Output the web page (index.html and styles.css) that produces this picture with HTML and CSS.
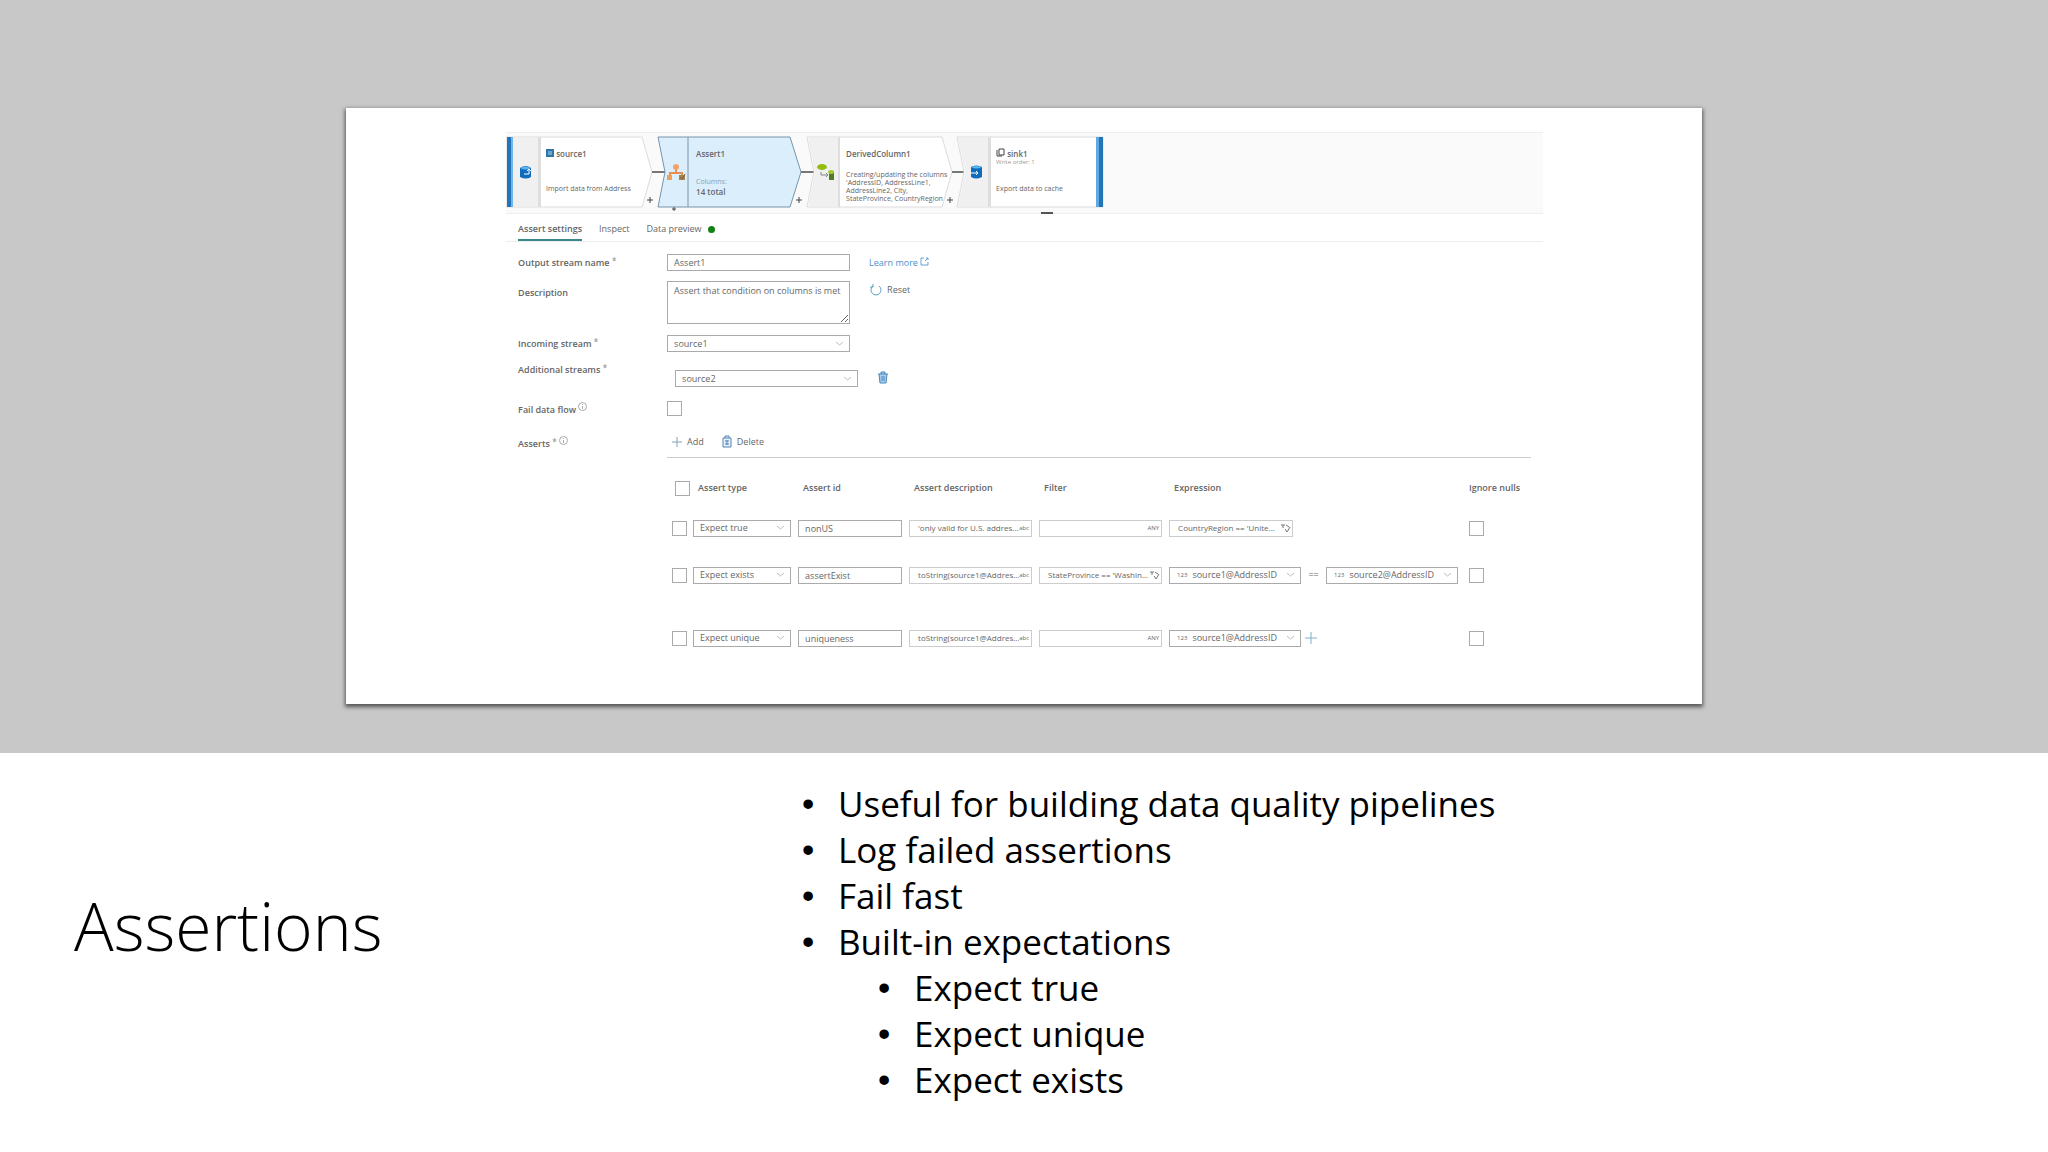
FILE: index.html
```html
<!DOCTYPE html>
<html lang="en">
<head>
  <meta charset="UTF-8">
  <meta name="viewport" content="width=device-width, initial-scale=1.0">
  <title>Assertions</title>
  <link rel="stylesheet" href="styles.css">
</head>
<body>

  <!-- Data flow editor -->
  <section class="stage">
    <div class="card">
      <div class="flow">
        <div class="node node-source">
          <svg class="node-shape" viewBox="0 0 150 70" width="150" height="70">
            <path d="M0 0H135L145 35L135 70H0Z" fill="#fff" stroke="#dcdcdc"/>
            <path d="M6 1H31V69H6Z" fill="#f0f0f0"/>
            <path d="M31 0H34V70H31Z" fill="#dedede"/>
            <path d="M0 0H4V70H0Z" fill="#2474b8"/>
            <path d="M4 0H6V70H4Z" fill="#70b4ee"/>
            <path d="M145 35H158" stroke="#777" stroke-width="2"/>
            <path d="M143 60V66M140 63H146" stroke="#444"/>
          </svg>
          <svg class="node-icon" viewBox="0 0 14 14" width="14" height="14">
            <path d="M1 3Q7 -1 12 3V12Q7 15 1 12Z" fill="#0f6cbd"/>
            <path d="M1 3Q7 6 12 3Q7 0 1 3" fill="#5ab6ee"/>
            <path d="M5 9H10V5M8 6L10 4L12 6" fill="none" stroke="#fff"/>
          </svg>
          <div class="node-text">
            <strong><svg viewBox="0 0 8 8" width="8" height="8"><path d="M0 0H8V8H0Z" fill="#2e75a8"/><path d="M2 3H6M2 5H6" stroke="#a9d5f0"/></svg> source1</strong>
            <span class="node-note">Import data from Address</span>
          </div>
        </div>

        <div class="node node-assert">
          <svg class="node-shape" viewBox="0 0 150 70" width="150" height="70">
            <path d="M1 0H133L144 35L133 70H1L8 35Z" fill="#dbeefc" stroke="#7894aa"/>
            <path d="M31 0V70" stroke="#7894aa"/>
            <path d="M144 35H158" stroke="#777" stroke-width="2"/>
            <path d="M142 60V66M139 63H145M17 70V74M15 72H19" stroke="#444"/>
          </svg>
          <svg class="node-icon" viewBox="0 0 18 18" width="18" height="18">
            <path d="M9 5V10M3 14V10H15V14" fill="none" stroke="#e8904f" stroke-width="2"/>
            <circle cx="9" cy="4" r="3" fill="#f3a268"/>
            <path d="M0 12H5V17H0Z" fill="#e9a15f"/>
            <path d="M12 12H18V17H12Z" fill="#a88449"/>
            <path d="M13 14L15 16L18 11" fill="none" stroke="#6d6540"/>
          </svg>
          <div class="node-text">
            <strong>Assert1</strong>
            <span class="node-columns">Columns:</span>
            <span class="node-total">14 total</span>
          </div>
        </div>

        <div class="node node-derived">
          <svg class="node-shape" viewBox="0 0 150 70" width="150" height="70">
            <path d="M0 0H135L145 35L135 70H0L7 35Z" fill="#fff" stroke="#dcdcdc"/>
            <path d="M1 1H31V69H1L8 35Z" fill="#f0f0f0"/>
            <path d="M31 0H33V70H31Z" fill="#dedede"/>
            <path d="M145 35H158" stroke="#777" stroke-width="2"/>
            <path d="M143 60V66M140 63H146" stroke="#444"/>
          </svg>
          <svg class="node-icon" viewBox="0 0 18 18" width="18" height="18">
            <ellipse cx="5" cy="4" rx="5" ry="3" fill="#94bd0d"/>
            <path d="M4 9V12H11M9 10L11 12L9 14" fill="none" stroke="#858585"/>
            <path d="M12 8H17V17H12Z" fill="#557a24"/>
            <ellipse cx="14" cy="9" rx="3" ry="2" fill="#a3c739"/>
          </svg>
          <div class="node-text">
            <strong>DerivedColumn1</strong>
            <p class="node-desc">Creating/updating the columns 'AddressID, AddressLine1, AddressLine2, City, StateProvince, CountryRegion</p>
          </div>
        </div>

        <div class="node node-sink">
          <svg class="node-shape" viewBox="0 0 150 70" width="150" height="70">
            <path d="M0 0H146V70H0L7 35Z" fill="#fff" stroke="#dcdcdc"/>
            <path d="M1 1H31V69H1L8 35Z" fill="#f0f0f0"/>
            <path d="M31 0H34V70H31Z" fill="#dedede"/>
            <path d="M139 0H142V70H139Z" fill="#5ea9e4"/>
            <path d="M142 0H146V70H142Z" fill="#2474b8"/>
          </svg>
          <svg class="node-icon" viewBox="0 0 14 14" width="14" height="14">
            <path d="M2 2Q7 -1 13 2V12Q7 15 2 12Z" fill="#0f6cbd"/>
            <path d="M2 2Q7 5 13 2Q7 0 2 2" fill="#5ab6ee"/>
            <path d="M0 8H9M7 6L9 8L7 10" fill="none" stroke="#fff"/>
          </svg>
          <div class="node-text">
            <strong><svg viewBox="0 0 9 9" width="9" height="9"><path d="M1 2V8H6M3 1H8V7H3Z" fill="none" stroke="#444"/></svg> sink1</strong>
            <span class="node-order">Write order: 1</span>
            <span class="node-note">Export data to cache</span>
          </div>
        </div>
        <span class="flow-handle"></span>
      </div>

      <nav class="tabs">
        <button class="tab tab-active" type="button">Assert settings</button>
        <button class="tab" type="button">Inspect</button>
        <button class="tab" type="button">Data preview <span class="dot"></span></button>
      </nav>

      <form class="settings">
        <div class="row row-name">
          <label for="streamName">Output stream name <sup>*</sup></label>
          <input class="field" id="streamName" type="text" value="Assert1">
          <a class="learn" href="#">Learn more <svg viewBox="0 0 9 9" width="9" height="9"><path d="M4 1H1V8H8V5M6 1H8V3M8 1L5 4" fill="none" stroke="#64a3d6"/></svg></a>
        </div>
        <div class="row row-desc">
          <label for="description">Description</label>
          <textarea class="field" id="description">Assert that condition on columns is met</textarea>
          <button class="reset" type="button">
            <svg viewBox="0 0 12 12" width="12" height="12"><path d="M3 2A5 5 0 1 0 9 2M3 0V3H0" fill="none" stroke="#5b9fc0"/></svg>
            Reset
          </button>
        </div>
        <div class="row row-incoming">
          <label for="incoming">Incoming stream <sup>*</sup></label>
          <select class="field" id="incoming"><option>source1</option></select>
        </div>
        <div class="row row-additional">
          <label for="additional">Additional streams <sup>*</sup></label>
          <select class="field" id="additional"><option>source2</option></select>
          <button class="trash" type="button" aria-label="Remove stream">
            <svg viewBox="0 0 10 12" width="10" height="12"><path d="M0 2H10M3 2V0H7V2M1 2L2 11H8L9 2" fill="#a9cdec" stroke="#4888bd"/><path d="M4 4V9M6 4V9" stroke="#4888bd"/></svg>
          </button>
        </div>
        <div class="row row-fail">
          <label for="fail">Fail data flow <svg class="info" viewBox="0 0 9 9" width="9" height="9"><circle cx="4.5" cy="4.5" r="4"/><path d="M4.5 4V7M4.5 2V3"/></svg></label>
          <input class="check" id="fail" type="checkbox">
        </div>
        <div class="row row-asserts">
          <span class="row-label">Asserts <sup>*</sup> <svg class="info" viewBox="0 0 9 9" width="9" height="9"><circle cx="4.5" cy="4.5" r="4"/><path d="M4.5 4V7M4.5 2V3"/></svg></span>
          <div class="toolbar">
            <button type="button"><svg viewBox="0 0 10 10" width="10" height="10"><path d="M5 0V10M0 5H10" stroke="#7fa3b5"/></svg> Add</button>
            <button type="button"><svg viewBox="0 0 10 12" width="10" height="12"><path d="M1 2H9V11H1ZM3 2V0H7V2" fill="#e6f0fa" stroke="#5684b8"/><path d="M5 4V9M3 5H7M3 8H7" stroke="#5684b8"/></svg> Delete</button>
          </div>
        </div>

        <table class="asserts">
          <thead>
            <tr>
              <th class="col-check"><input class="check" type="checkbox" aria-label="Select all"></th>
              <th class="col-type">Assert type</th>
              <th class="col-id">Assert id</th>
              <th class="col-desc">Assert description</th>
              <th class="col-filter">Filter</th>
              <th class="col-expr">Expression</th>
              <th class="col-nulls">Ignore nulls</th>
            </tr>
          </thead>
          <tbody>
            <tr class="assert-true">
              <td><input class="check" type="checkbox" aria-label="Select row"></td>
              <td><select class="field" aria-label="Assert type"><option>Expect true</option></select></td>
              <td><input class="field" type="text" value="nonUS" aria-label="Assert id"></td>
              <td><div class="expr"><input type="text" value="'only valid for U.S. addres..." aria-label="Assert description"><span>abc</span></div></td>
              <td><div class="expr"><input type="text" value="" aria-label="Filter"><span>ANY</span></div></td>
              <td><div class="expr expr-first"><input type="text" value="CountryRegion == 'Unite..." aria-label="Expression"><svg viewBox="0 0 9 9" width="9" height="9"><path d="M0 1H4M2 1V4M4 5L6 8L9 3M5 1L8 3" fill="none" stroke="#777"/></svg></div></td>
              <td><input class="check" type="checkbox" aria-label="Ignore nulls"></td>
            </tr>
            <tr class="assert-exists">
              <td><input class="check" type="checkbox" aria-label="Select row"></td>
              <td><select class="field" aria-label="Assert type"><option>Expect exists</option></select></td>
              <td><input class="field" type="text" value="assertExist" aria-label="Assert id"></td>
              <td><div class="expr"><input type="text" value="toString(source1@Addres..." aria-label="Assert description"><span>abc</span></div></td>
              <td><div class="expr"><input type="text" value="StateProvince == 'Washin..." aria-label="Filter"><svg viewBox="0 0 9 9" width="9" height="9"><path d="M0 1H4M2 1V4M4 5L6 8L9 3M5 1L8 3" fill="none" stroke="#777"/></svg></div></td>
              <td>
                <div class="pair">
                  <div class="column"><span>123</span><select aria-label="Left column"><option>source1@AddressID</option></select></div>
                  <span class="equals">==</span>
                  <div class="column"><span>123</span><select aria-label="Right column"><option>source2@AddressID</option></select></div>
                </div>
              </td>
              <td><input class="check" type="checkbox" aria-label="Ignore nulls"></td>
            </tr>
            <tr class="assert-unique">
              <td><input class="check" type="checkbox" aria-label="Select row"></td>
              <td><select class="field" aria-label="Assert type"><option>Expect unique</option></select></td>
              <td><input class="field" type="text" value="uniqueness" aria-label="Assert id"></td>
              <td><div class="expr"><input type="text" value="toString(source1@Addres..." aria-label="Assert description"><span>abc</span></div></td>
              <td><div class="expr"><input type="text" value="" aria-label="Filter"><span>ANY</span></div></td>
              <td>
                <div class="pair">
                  <div class="column"><span>123</span><select aria-label="Column"><option>source1@AddressID</option></select></div>
                  <button class="add-column" type="button" aria-label="Add column"><svg viewBox="0 0 12 12" width="12" height="12"><path d="M6 0V12M0 6H12" stroke="#7fb0cc"/></svg></button>
                </div>
              </td>
              <td><input class="check" type="checkbox" aria-label="Ignore nulls"></td>
            </tr>
          </tbody>
        </table>
      </form>
    </div>
  </section>

  <!-- Slide text -->
  <section class="notes">
    <h1>Assertions</h1>
    <ul>
      <li>Useful for building data quality pipelines</li>
      <li>Log failed assertions</li>
      <li>Fail fast</li>
      <li>Built-in expectations
        <ul>
          <li>Expect true</li>
          <li>Expect unique</li>
          <li>Expect exists</li>
        </ul>
      </li>
    </ul>
  </section>

</body>
</html>
```
FILE: styles.css
```css
* {
  box-sizing: border-box;
}

body {
  margin: 0;
  background-color: #fff;
  color: #000;
  font-family: "Open Sans", "Noto Sans", sans-serif;
}

.stage {
  padding: 108px 16.9% 49px;
  background-color: #c8c8c9;
}

.card {
  padding: 24px 159px 30px 160px;
  background-color: #fff;
  box-shadow: 0 2px 4px 1px #555;
  color: #666;
  font-size: 9px;
  line-height: 12px;
}

button,
input,
select,
textarea {
  margin: 0;
  padding: 0;
  border: 0;
  border-radius: 0;
  background: none;
  color: inherit;
  font: inherit;
}

svg {
  overflow: visible;
  flex: none;
}

/* Flow */
.flow {
  position: relative;
  display: flex;
  height: 82px;
  padding: 4px 1px;
  background-color: #fafafa;
  border-top: 1px solid #eee;
  border-bottom: 1px solid #eee;
}

.node {
  position: relative;
  display: flex;
  width: 150px;
  height: 70px;
}

.node-shape {
  position: absolute;
  top: 0;
  left: 0;
}

.node-icon {
  position: relative;
  align-self: center;
  margin-left: 10px;
}

.node-source .node-icon,
.node-sink .node-icon {
  margin-left: 12px;
}

.node-text {
  position: relative;
  display: flex;
  flex-direction: column;
  width: 104px;
  height: 70px;
  margin-left: 11px;
  padding-top: 11px;
  font-size: 8px;
  line-height: 11px;
}

.node-source .node-text,
.node-sink .node-text {
  margin-left: 13px;
}

.node-text strong {
  font-weight: 600;
}

.node-note {
  margin-top: auto;
  padding-bottom: 13px;
  font-size: 7px;
}

.node-order {
  color: #999;
  font-size: 6px;
  line-height: 6px;
}

.node-columns {
  margin-top: 18px;
  color: #8aa0b0;
  font-size: 7px;
  line-height: 10px;
}

.node-total {
  font-weight: 600;
  line-height: 10px;
}

.node-desc {
  margin: 12px 0 0;
  font-size: 7px;
  line-height: 8px;
}

.flow-handle {
  position: absolute;
  bottom: -1px;
  left: 535px;
  width: 12px;
  height: 2px;
  background-color: #555;
}

/* Tabs */
.tabs {
  display: flex;
  gap: 17px;
  height: 28px;
  padding-left: 12px;
  border-bottom: 1px solid #eee;
}

.tab {
  display: flex;
  align-items: center;
  gap: 6px;
  padding-top: 5px;
  border-bottom: 2px solid transparent;
}

.tab-active {
  border-bottom-color: #3c8589;
  font-weight: 600;
}

.dot {
  width: 7px;
  height: 7px;
  border-radius: 50%;
  background-color: #128212;
}

/* Settings */
.settings {
  padding: 12px 12px 0;
}

.row {
  display: grid;
  grid-template-columns: 149px 183px 1fr;
  align-items: center;
  justify-items: start;
}

.row label,
.row-label {
  font-weight: 600;
}

.row sup {
  color: #999;
  font-size: 8px;
  line-height: 0;
  vertical-align: 2px;
}

.field {
  width: 100%;
  height: 17px;
  padding: 0 6px;
  border: 1px solid #aaa;
  background-color: #fff;
}

select {
  appearance: none;
  background-image: url("data:image/svg+xml,%3Csvg xmlns='http://www.w3.org/2000/svg' width='7' height='4'%3E%3Cpath d='M0 0L3.5 3L7 0' fill='none' stroke='%23bbb'/%3E%3C/svg%3E");
  background-repeat: no-repeat;
  background-position: right 6px center;
}

textarea.field {
  display: block;
  height: 43px;
  padding-top: 3px;
  resize: both;
}

.row-desc {
  align-items: start;
  margin-top: 10px;
}

.row-desc label {
  padding-top: 6px;
}

.learn {
  margin-left: 19px;
  color: #4a90cb;
  text-decoration: none;
}

.reset {
  display: flex;
  align-items: center;
  gap: 5px;
  margin: 3px 0 0 20px;
}

.row-incoming {
  margin-top: 11px;
}

/* the extra stream sits indented, a little under its label */
.row-additional {
  grid-template-columns: 157px 183px 1fr;
  align-items: start;
  margin-top: 12px;
}

.row-additional .field {
  margin-top: 6px;
}

.trash {
  display: flex;
  margin: 8px 0 0 20px;
}

.check {
  display: block;
  appearance: none;
  width: 15px;
  height: 15px;
  border: 1px solid #aaa;
  background-color: #fff;
}

.row-fail {
  margin-top: 14px;
}

.info {
  fill: none;
  stroke: #aaa;
  vertical-align: 2px;
}

.row-asserts {
  grid-template-columns: 149px 1fr;
  margin-top: 11px;
}

.toolbar {
  display: flex;
  gap: 18px;
  width: 100%;
  height: 31px;
  padding-left: 5px;
  border-bottom: 1px solid #ccc;
}

.toolbar button {
  display: flex;
  align-items: center;
  gap: 5px;
}

/* Asserts table */
.asserts {
  width: calc(100% - 149px);
  margin: 10px 0 0 149px;
  table-layout: fixed;
  border-collapse: collapse;
}

.asserts tr {
  height: 40px;
}

.asserts .assert-exists {
  height: 54px;
}

.asserts .assert-unique {
  height: 72px;
}

.asserts th {
  padding: 0 0 0 5px;
  font-weight: 600;
  text-align: left;
  white-space: nowrap;
}

.asserts td {
  padding: 0 7px 0 0;
}

.asserts td:first-child {
  padding: 0 0 0 5px;
}

.asserts .col-check {
  width: 26px;
  padding-left: 8px;
}

.col-type {
  width: 105px;
}

.col-id {
  width: 111px;
}

.col-desc {
  width: 130px;
}

.col-filter {
  width: 130px;
}

.asserts .col-nulls {
  width: 62px;
  padding-left: 0;
}

.expr,
.column {
  display: flex;
  align-items: center;
  height: 17px;
  padding: 0 2px 0 8px;
  border: 1px solid #ccc;
  font-size: 8px;
}

.expr input {
  flex: 1;
  min-width: 0;
}

.expr span,
.column span {
  font-size: 6px;
}

.expr-first {
  width: 124px;
}

.pair {
  display: flex;
  align-items: center;
}

.column {
  width: 132px;
  padding: 0 0 0 7px;
  border-color: #aaa;
  font-size: 9px;
}

.column select {
  flex: 1;
  min-width: 0;
  padding-left: 5px;
}

.equals {
  width: 25px;
  text-align: center;
}

.add-column {
  display: flex;
  margin-left: 4px;
}

/* Slide text */
.notes {
  display: grid;
  grid-template-columns: 728px 1fr;
  align-items: center;
  padding: 28px 40px 44px 74px;
}

.notes h1 {
  margin: 0 0 34px;
  font-size: 66px;
  font-weight: 300;
  line-height: 80px;
}

.notes ul {
  margin: 0;
  padding: 0;
  list-style: none;
  font-size: 35px;
  line-height: 46px;
}

.notes li {
  padding-left: 36px;
}

.notes li::before {
  content: "•";
  float: left;
  margin-left: -36px;
  font-family: "Liberation Sans", sans-serif;
}

.notes li li {
  margin-left: 40px;
}
```
